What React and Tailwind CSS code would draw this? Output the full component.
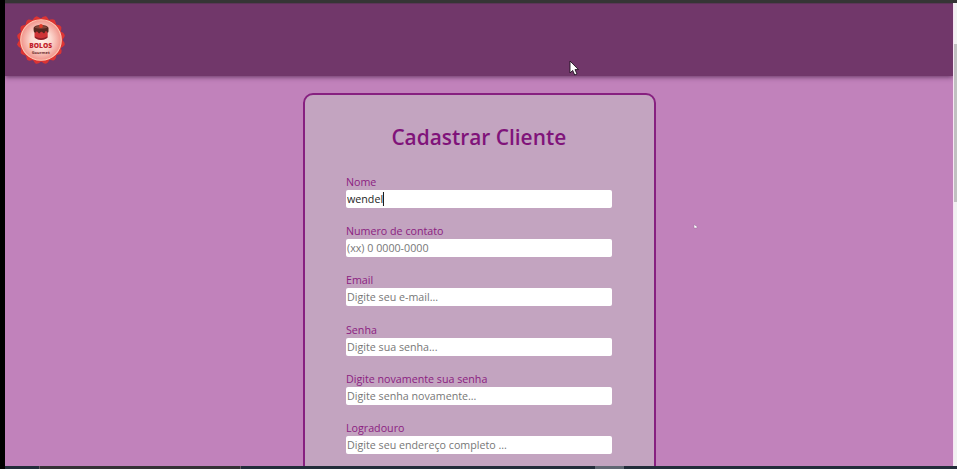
const fields = [
  { label: 'Nome', value: 'wendel' },
  { label: 'Numero de contato', placeholder: '(xx) 0 0000-0000' },
  { label: 'Email', placeholder: 'Digite seu e-mail...' },
  { label: 'Senha', placeholder: 'Digite sua senha...' },
  { label: 'Digite novamente sua senha', placeholder: 'Digite senha novamente...' },
  { label: 'Logradouro', placeholder: 'Digite seu endereço completo ...' },
];

const petals = Array.from({ length: 16 }, (_, i) => (i * 360) / 16);

function Logo() {
  return (
    <svg className="h-[50px] w-[50px]" viewBox="0 0 50 50" aria-label="Bolos Gourmet">
      <defs>
        <radialGradient id="plate">
          <stop offset="0" stopColor="#fff0e8" />
          <stop offset="0.5" stopColor="#fcd9d0" />
          <stop offset="1" stopColor="#f0938a" />
        </radialGradient>
      </defs>
      {petals.map((a) => (
        <path key={a} d="M20.5 5Q22 1 25.5 0.8Q28 2 29.5 5Z" fill="#dc3433" transform={`rotate(${a + 11} 25 25)`} />
      ))}
      <circle cx="25" cy="25" r="21.8" fill="#dc3433" />
      <circle cx="25" cy="25" r="20.3" fill="url(#plate)" stroke="#ffc9b4" strokeWidth="1.1" />
      <path d="M18.5 14V22.6Q25 27 31.7 22.6V14Z" fill="#cf3335" />
      <path d="M19 23Q25 27 31.2 23V21.4Q25 25 19 21.4Z" fill="#8e2028" />
      <path d="M17.6 12.8Q18.5 10.2 25 10Q31.5 10.2 32.5 12.8V16.5Q31.8 19 30.8 16.5Q29.5 15 28.6 18Q27.4 19 26.3 17Q25 16 24 17.8Q22.8 19.4 21.8 17Q20.6 15.5 19.4 17.8Q17.6 18 17.6 15Z" fill="#55261f" />
      <ellipse cx="25" cy="12.3" rx="6.4" ry="1.5" fill="#86463a" />
      <circle cx="25" cy="11" r="1.9" fill="#e43b28" />
      <text x="24.7" y="33.4" textAnchor="middle" textLength="23" lengthAdjust="spacingAndGlyphs" fontFamily="Open Sans, sans-serif" fontSize="7.4" fontWeight="800" fill="#c21e2a">BOLOS</text>
      <text x="24.7" y="38.6" textAnchor="middle" textLength="18" lengthAdjust="spacingAndGlyphs" fontFamily="Open Sans, sans-serif" fontSize="4" fontWeight="700" fill="#6b2c2c">Gourmet</text>
    </svg>
  );
}

function Field({ label, value, placeholder }) {
  return (
    <div className="h-[49.2px]">
      <div className="h-[16px] text-[11.6px] leading-[16px] whitespace-nowrap text-[#8b2180]">
        <span className="inline-block origin-left scale-x-[0.922]">{label}</span>
      </div>
      <div className="flex h-[18px] items-center rounded-[2px] bg-white pl-px text-[11.6px] leading-[18px] whitespace-nowrap">
        {value ? (
          <span className="flex origin-left scale-x-[0.922] items-center text-[#252525]">
            {value}
            <span className="h-[14px] w-[1.1px] bg-black" />
          </span>
        ) : (
          <span className="origin-left scale-x-[0.922] text-[#777777]">{placeholder}</span>
        )}
      </div>
    </div>
  );
}

export default function App() {
  return (
    <div className="relative flex h-[469px] w-[957px] flex-col overflow-hidden bg-black font-['Open_Sans','Noto_Sans',sans-serif]">
      <div className="ml-[5px] h-[3px] shrink-0 bg-[#353535]" />
      <div className="flex h-[463px] shrink-0 pl-[5px]">
        <div className="flex w-[948px] flex-col overflow-hidden bg-[#c182bb]">
          <header className="flex h-[73px] shrink-0 items-center border-t border-[#5c3558] bg-[#71376a] pl-[11px] shadow-[0_1px_5px_rgba(65,25,65,0.75)]">
            <Logo />
          </header>
          <main className="flex justify-center pt-[17px]">
            <section className="h-[600px] w-[353px] shrink-0 rounded-[10px] border-2 border-[#872080] bg-[#c3a4c0] px-[41.5px]">
              <h1 className="mt-[25px] h-[54px] text-center text-[22.4px] leading-[34px] font-semibold whitespace-nowrap text-[#80137a]">
                <span className="inline-block scale-x-[0.932]">Cadastrar Cliente</span>
              </h1>
              {fields.map((f) => (
                <Field key={f.label} {...f} />
              ))}
            </section>
          </main>
        </div>
        <div className="w-[4px] border-l border-[#f8e6f5] bg-[#f1f1f1] pt-[41px]">
          <div className="h-[158px] bg-[#c1c1c1]" />
        </div>
      </div>
      <footer className="ml-[5px] flex h-[3px] shrink-0 bg-[#222d3a]">
        <div className="ml-[34px] w-[202px] border-x border-[#665b62] bg-[#353135]" />
        <div className="ml-[354px] w-[29px] bg-[#606773]" />
      </footer>
      <svg className="absolute top-[60px] left-[569px] h-[17px] w-[12px]" viewBox="0 0 12 17" aria-hidden="true">
        <path d="M1 1V13L3.7 10.4L5.7 15L8 14L6 9.6H9.5Z" fill="white" stroke="#201320" strokeWidth="0.9" />
      </svg>
      <svg className="absolute top-[224px] left-[693px] h-[5px] w-[5px]" viewBox="0 0 5 5" aria-hidden="true">
        <path d="M1 0.5V4H4V2.5Z" fill="white" stroke="#99709a" strokeWidth="0.5" />
      </svg>
    </div>
  );
}
